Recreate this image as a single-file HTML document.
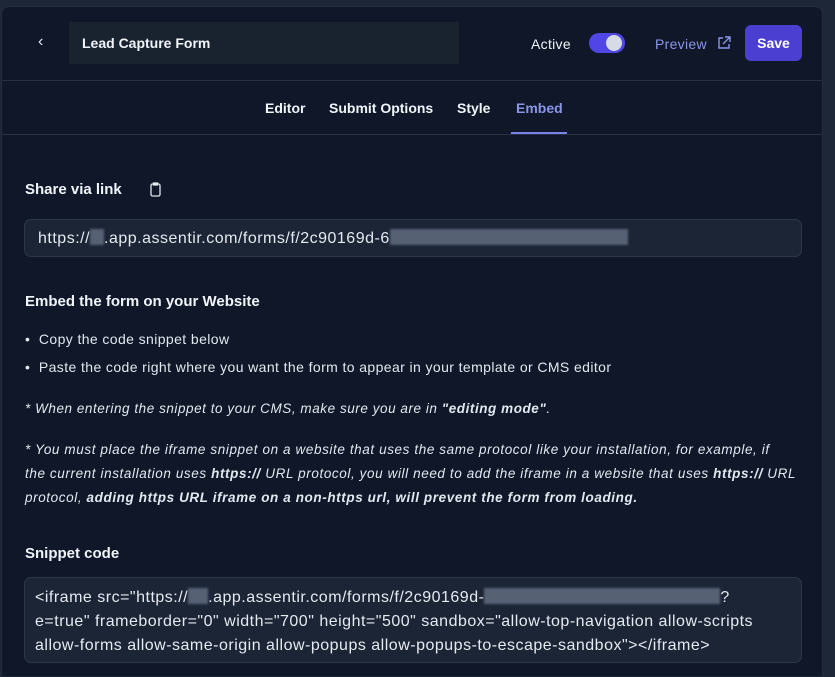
<!DOCTYPE html><html><head><style>
html,body{margin:0;width:835px;height:677px;overflow:hidden}
body{background:#1e2738;font-family:"Liberation Sans",sans-serif;color:#e2e8f0;position:relative}
.panel{position:absolute;left:1px;top:6px;width:820px;height:669px;background:#0f1729;border-radius:8px 8px 0 0;border:1px solid #232d3f;border-bottom:none}
.abs{position:absolute}
.hdr{position:absolute;left:0;right:0;top:73px;border-top:1px solid #263042}
.tabs{position:absolute;left:0;right:0;top:127px;border-top:1px solid #263042}
.tab{position:absolute;top:93px;font-size:14px;font-weight:bold;color:#f1f5f9}
.box{position:absolute;left:24px;right:33px;background:#1b2536;border:1px solid #2c3749;border-radius:7px;font-size:16px;letter-spacing:0.5px;color:#e5e9f0}
.blur{display:inline-block;background:#566174;height:16px;vertical-align:-2px;filter:blur(1px)}
</style></head><body>
<div class="panel">
<div class="abs" style="left:36px;top:26px;font-size:16px;color:#e2e8f0">&#8249;</div>
<div class="abs" style="left:67px;top:15px;width:390px;height:42px;background:#19222f;"></div>
<div class="abs" style="left:80px;top:28px;font-size:14px;font-weight:bold;color:#f1f5f9">Lead Capture Form</div>
<div class="abs" style="left:529px;top:29px;font-size:14px;color:#f1f5f9;letter-spacing:0.3px">Active</div>
<div class="abs" style="left:587px;top:26px;width:36px;height:20px;background:#4f46e5;border-radius:10px"><div style="position:absolute;right:3px;top:2px;width:16px;height:16px;border-radius:8px;background:#d6dbe4"></div></div>
<div class="abs" style="left:653px;top:29px;font-size:14px;color:#8b95e8;letter-spacing:0.3px">Preview</div>
<svg class="abs" style="left:715px;top:29px" width="14" height="14" viewBox="0 0 14 14" fill="none" stroke="#8b95e8" stroke-width="1.4"><path d="M6 2H2v10h10V8M8 1h5v5M13 1L6 8"/></svg>
<div class="abs" style="left:743px;top:18px;width:57px;height:36px;background:#4a3fd0;border-radius:6px;font-size:14px;font-weight:bold;color:#fff;text-align:center;line-height:36px">Save</div>
<div class="hdr"></div>
<div class="tab" style="left:263px">Editor</div>
<div class="tab" style="left:327px">Submit Options</div>
<div class="tab" style="left:455px">Style</div>
<div class="tab" style="left:514px;color:#8b95e8">Embed</div>
<div class="abs" style="left:509px;top:125px;width:56px;height:2px;background:#7c83e8"></div>
<div class="tabs"></div>
</div>
<div class="abs" style="left:25px;top:181px;font-size:15px;font-weight:bold;color:#f1f5f9">Share via link</div>
<svg class="abs" style="left:150px;top:182px" width="11" height="15" viewBox="0 0 11 15" fill="none" stroke="#e2e8f0" stroke-width="1.3"><rect x="1" y="2" width="9" height="12" rx="1.5"/><path d="M3.5 1h4v2h-4z"/></svg>
<div class="box" style="top:219px;height:36px;line-height:37px;padding-left:13px">https://<span class="blur" style="width:14px"></span>.app.assentir.com/forms/f/2c90169d-6<span class="blur" style="width:238px"></span></div>
<div class="abs" style="left:25px;top:293px;font-size:15px;font-weight:bold;color:#f1f5f9">Embed the form on your Website</div>
<div class="abs" style="left:25px;top:325px;font-size:14px;line-height:28px;color:#e2e8f0;letter-spacing:0.4px">
<div>&bull;&nbsp;&nbsp;Copy the code snippet below</div>
<div>&bull;&nbsp;&nbsp;Paste the code right where you want the form to appear in your template or CMS editor</div></div>
<div class="abs" style="left:25px;top:401px;font-size:13.5px;font-style:italic;color:#e2e8f0;letter-spacing:0.55px">* When entering the snippet to your CMS, make sure you are in <b>"editing mode"</b>.</div>
<div class="abs" style="left:25px;top:438px;width:800px;white-space:nowrap;font-size:13.5px;font-style:italic;line-height:24px;color:#e2e8f0;letter-spacing:0.6px">* You must place the iframe snippet on a website that uses the same protocol like your installation, for example, if<br>the current installation uses <b>https://</b> URL protocol, you will need to add the iframe in a website that uses <b>https://</b> URL<br>protocol, <b>adding https URL iframe on a non-https url, will prevent the form from loading.</b></div>
<div class="abs" style="left:25px;top:545px;font-size:15px;font-weight:bold;color:#f1f5f9">Snippet code</div>
<div class="box" style="top:577px;height:86px;padding:8px 10px;box-sizing:border-box;line-height:24px">&lt;iframe src="https://<span class="blur" style="width:20px"></span>.app.assentir.com/forms/f/2c90169d-<span class="blur" style="width:236px"></span>?<br>e=true" frameborder="0" width="700" height="500" sandbox="allow-top-navigation allow-scripts allow-forms allow-same-origin allow-popups allow-popups-to-escape-sandbox"&gt;&lt;/iframe&gt;</div>
</body></html>
